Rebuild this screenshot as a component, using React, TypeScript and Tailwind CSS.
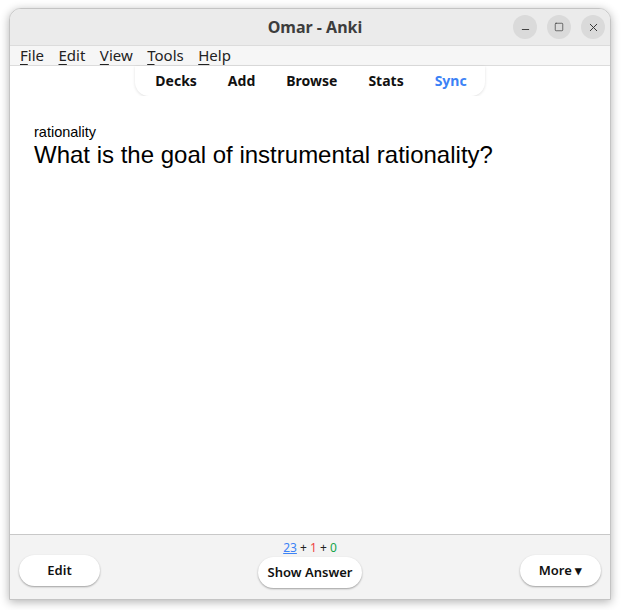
import React from 'react';
import { Minus, Square, X } from 'lucide-react';

const menus = ['File', 'Edit', 'View', 'Tools', 'Help'];
const tabs = ['Decks', 'Add', 'Browse', 'Stats'];

const WinButton: React.FC<{ children: React.ReactNode }> = ({ children }) => (
    <div className="w-6 h-6 rounded-full bg-[#dadada] flex items-center justify-center text-[#333]">
        {children}
    </div>
);

const PillButton: React.FC<{ children: React.ReactNode; className?: string }> = ({ children, className }) => (
    <button
        className={`h-[31px] rounded-[16px] bg-white text-[13px] font-semibold text-[#111] shadow-[0_1px_2px_rgba(0,0,0,0.35)] ${className ?? ''}`}
    >
        {children}
    </button>
);

export default function App() {
    return (
        <div className="w-[621px] h-[610px] bg-white pl-[9px] pt-[8px] font-['Noto_Sans',sans-serif]">
            <div className="w-[602px] h-[592px] flex flex-col rounded-t-[12px] overflow-hidden border border-[#c4c4c4] shadow-[0_2px_10px_rgba(0,0,0,0.3)] bg-white">
                {/* title bar */}
                <div className="h-[36px] shrink-0 bg-[#ebebeb] flex items-center relative">
                    <div className="flex-1 text-center text-[16px] font-bold text-[#3d3d3d] pl-[10px]">Omar - Anki</div>
                    <div className="absolute right-[5px] top-[6px] flex gap-[10px]">
                        <WinButton><Minus size={11} strokeWidth={2} className="mt-[5px]" /></WinButton>
                        <WinButton><Square size={10} strokeWidth={1.6} /></WinButton>
                        <WinButton><X size={13} strokeWidth={1.8} /></WinButton>
                    </div>
                </div>
                {/* menu bar */}
                <div className="h-[21px] shrink-0 bg-[#f6f6f6] border-t border-b border-[#dcdcdc] flex items-center pl-[10px] gap-[14.5px] text-[15px] text-[#222]">
                    {menus.map((m) => (
                        <span key={m} className="leading-none">
                            <span className="underline underline-offset-[3px]">{m[0]}</span>
                            {m.slice(1)}
                        </span>
                    ))}
                </div>
                {/* toolbar */}
                <div className="flex justify-center shrink-0">
                    <div className="w-[350px] h-[30px] flex items-center justify-center gap-[31px] rounded-b-[14px] shadow-[0_1px_3px_rgba(0,0,0,0.12)] text-[14px] font-bold text-[#111] pl-[2px] pb-[2px]">
                        {tabs.map((t) => (
                            <span key={t}>{t}</span>
                        ))}
                        <span className="text-[#3b82f6]">Sync</span>
                    </div>
                </div>
                {/* card */}
                <div className="flex-1 bg-white pl-[24px] pt-[27px] font-['Liberation_Sans',Arial,sans-serif] text-black">
                    <div className="text-[14.5px] leading-[18px]">rationality</div>
                    <div className="text-[24px] leading-[28px]">What is the goal of instrumental rationality?</div>
                </div>
                {/* bottom bar */}
                <div className="h-[65px] shrink-0 bg-[#f3f3f3] border-t border-[#c8c8c8] flex items-start justify-between px-[9px] relative">
                    <PillButton className="w-[81px] mt-[20px]">Edit</PillButton>
                    <div className="flex flex-col items-center">
                        <div className="text-[12px] leading-[16px] mt-[5px] text-[#222]">
                            <span className="text-[#3b82f6] underline">23</span> + <span className="text-[#ef4444]">1</span> + <span className="text-[#16a34a]">0</span>
                        </div>
                        <PillButton className="w-[104px] mt-[1px]">Show Answer</PillButton>
                    </div>
                    <PillButton className="w-[81px] mt-[20px]">More ▾</PillButton>
                </div>
            </div>
        </div>
    );
}
